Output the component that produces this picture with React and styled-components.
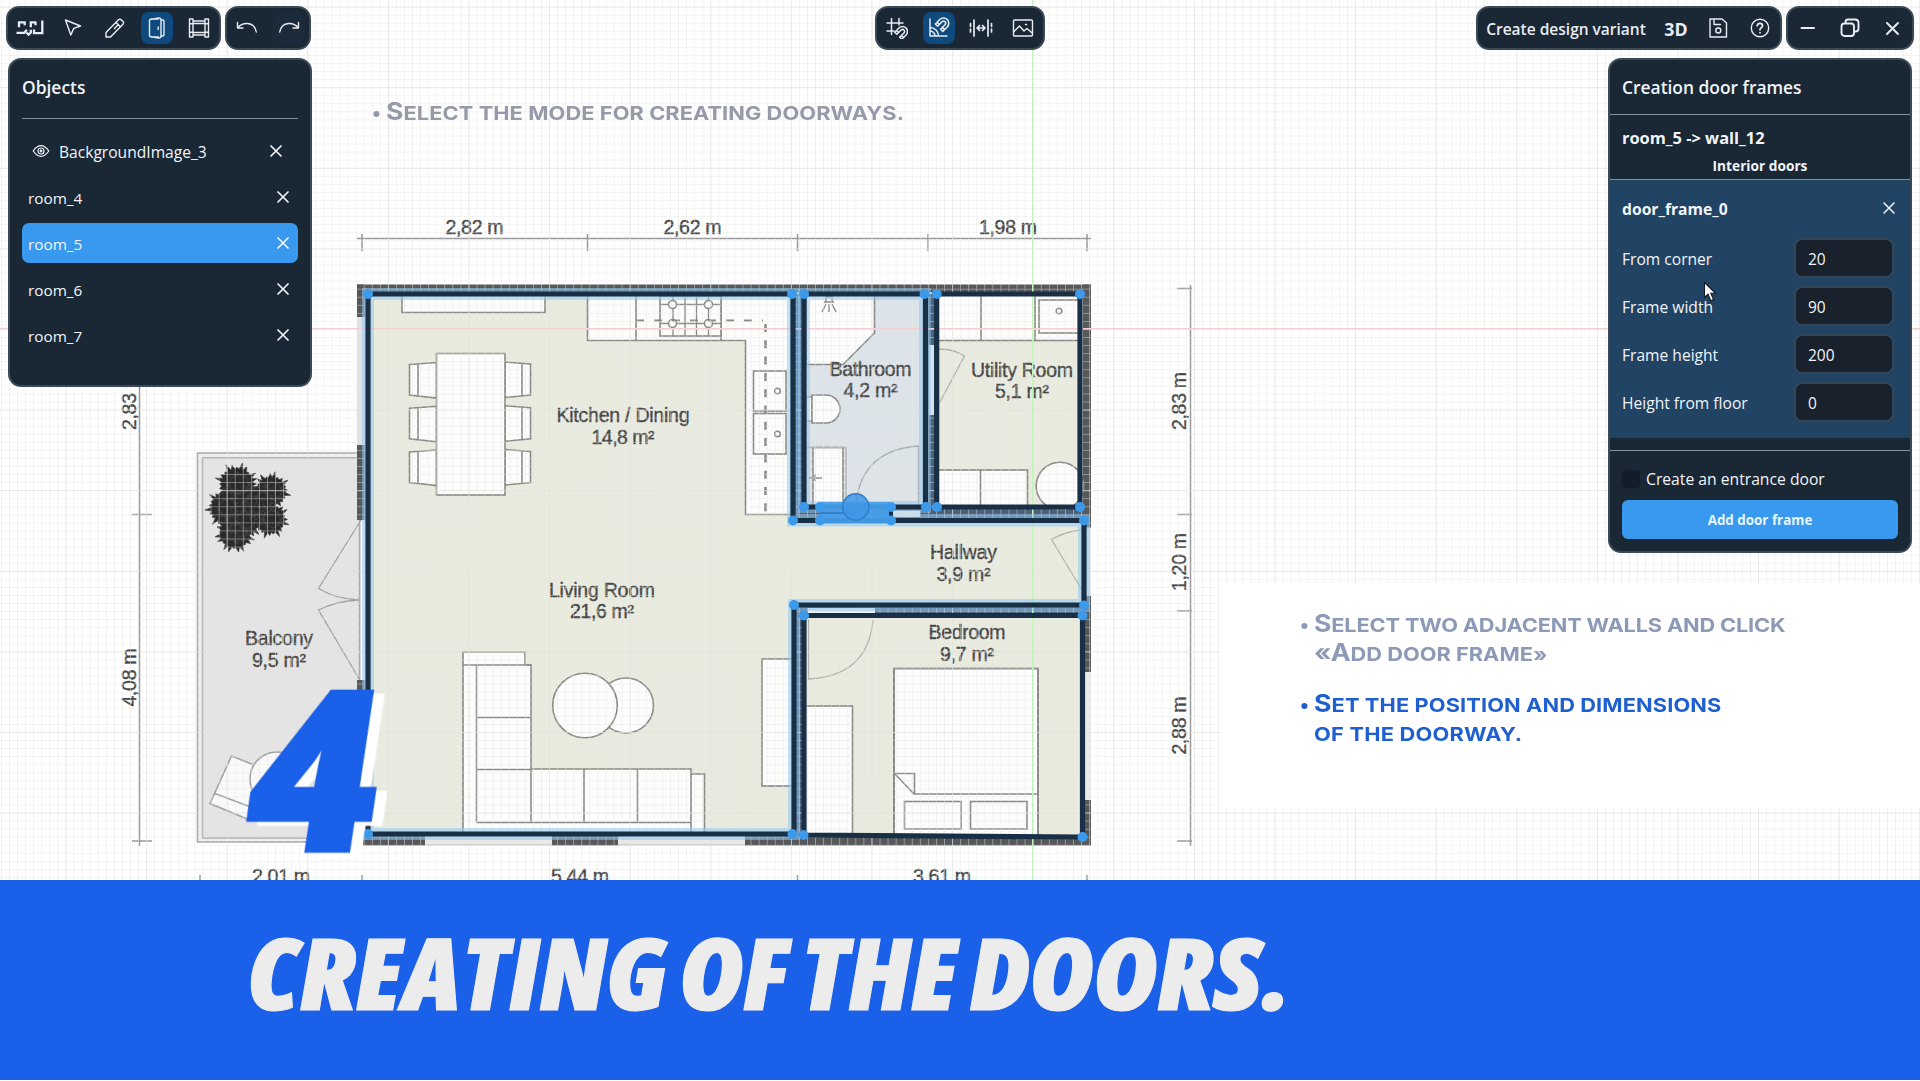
import React from 'react';
import styled, { createGlobalStyle, css } from 'styled-components';

const GlobalStyle = createGlobalStyle`
  * { box-sizing: border-box; }
  body { margin: 0; background: #fff; font-family: "Open Sans", "Noto Sans", sans-serif; color: #f1f5f9; }
`;

const ui = {
  panel: '#1a2735',
  border: '#3b4856',
  rule: '#8493a4',
  accent: '#3899ee',
  active: '#0f4a7e',
};

/* ---------- page frame ---------- */

const Page = styled.div`
  width: 1920px;
  height: 1081px;
  display: flex;
  flex-direction: column;
  overflow: hidden;
  background: #fff;
`;

const Workspace = styled.main`
  position: relative;
  height: 880px;
  overflow: hidden;
  flex: none;
`;

const Canvas = styled.svg`
  position: absolute;
  inset: 0;
  display: block;
`;

const Overlay = styled.div`
  position: relative;
  height: 100%;
  display: flex;
  flex-direction: column;
`;

const Header = styled.header`
  display: grid;
  grid-template-columns: 1fr auto 1fr;
  padding: 6px 6px 8px;
`;

const Side = styled.div`
  display: flex;
  gap: 4px;
  justify-content: ${p => (p.$end ? 'flex-end' : 'flex-start')};
`;

const ToolGroup = styled.div`
  display: flex;
  gap: 10px;
  height: 44px;
  padding: 4px;
  border: 2px solid ${ui.border};
  border-radius: 13px;
  background: ${ui.panel};
`;

const ToolButton = styled.button`
  display: flex;
  align-items: center;
  justify-content: center;
  width: ${p => p.$w || 32}px;
  height: 32px;
  padding: 0;
  border: 0;
  border-radius: 8px;
  color: #e8edf3;
  background: ${p => (p.$active ? ui.active : p.$hover ? '#1c2b3b' : 'transparent')};
`;

const TextButton = styled(ToolButton)`
  padding-top: 1px;
  font: ${p => p.$weight || 600} ${p => p.$size || 15.5}px "Open Sans", sans-serif;
  white-space: nowrap;
`;

const Columns = styled.div`
  display: flex;
  justify-content: space-between;
  align-items: flex-start;
  padding: 0 8px;
`;

const Panel = styled.section`
  width: 304px;
  height: ${p => p.$h}px;
  border: 2px solid ${ui.border};
  border-radius: 13px;
  background: ${ui.panel};
  overflow: hidden;
`;

const PanelTitle = styled.h2`
  margin: 0;
  font-size: 17.4px;
  font-weight: 600;
  line-height: 24px;
`;

/* ---------- objects panel ---------- */

const ObjectsBody = styled.div`
  padding: 15px 12px 0;
`;

const ObjectsHead = styled.div`
  height: 44px;
  border-bottom: 1px solid ${ui.rule};
  margin-bottom: 12px;
`;

const ObjectList = styled.div`
  display: flex;
  flex-direction: column;
  gap: 6px;
`;

const ObjectRow = styled.div`
  display: flex;
  align-items: center;
  height: 40px;
  padding: ${p => (p.$nested ? '0 16px 0 10px' : '0 9px 0 6px')};
  border-radius: 7px;
  background: ${p => (p.$selected ? ui.accent : 'transparent')};
`;

const ObjectName = styled.span`
  flex: 1;
  padding-top: 1px;
  margin-left: ${p => (p.$nested ? 9 : 0)}px;
  font-size: ${p => (p.$nested ? 15.6 : 15.3)}px;
  line-height: 20px;
`;

/* ---------- door frame panel ---------- */

const FrameHead = styled.div`
  height: 55px;
  padding: 15px 12px 0;
  border-bottom: 1px solid ${ui.rule};
`;

const WallInfo = styled.div`
  height: 65px;
  padding: 12px 12px 0;
  border-bottom: 1px solid ${ui.rule};
  font-weight: 700;
  display: flex;
  flex-direction: column;
`;

const WallPath = styled.span`
  font-size: 16.4px;
  line-height: 22px;
`;

const WallKind = styled.span`
  align-self: center;
  margin-top: 7px;
  font-size: 13.7px;
  line-height: 20px;
`;

const FrameCard = styled.div`
  height: 258px;
  padding: 16px 16px 0 12px;
  background: #214364;
`;

const CardHead = styled.div`
  display: flex;
  align-items: center;
  justify-content: space-between;
  height: 24px;
  margin: 0 -1px 18px 0;
`;

const CardName = styled.b`
  font-size: 15.7px;
  line-height: 22px;
  padding-top: 2px;
`;

const Field = styled.label`
  display: flex;
  align-items: center;
  justify-content: space-between;
  height: 40px;
  margin-bottom: 8px;
  font-size: 15.6px;
`;

const FieldLabel = styled.span`
  padding-top: 2px;
`;

const FieldInput = styled.input`
  width: 100px;
  height: 40px;
  padding: 2px 12px 0;
  border: 2px solid #354657;
  border-radius: 8px;
  background: #18212c;
  color: #f1f5f9;
  font: 400 15.5px "Open Sans", sans-serif;
  outline: none;
`;

const FrameFoot = styled.div`
  margin-top: 12px;
  border-top: 1px solid ${ui.rule};
  padding: 19px 12px 0;
`;

const CheckRow = styled.label`
  display: flex;
  align-items: center;
  gap: 6px;
  height: 18px;
  margin-bottom: 12px;
  font-size: 15.7px;
  line-height: 18px;
`;

const CheckBox = styled.span`
  width: 18px;
  height: 18px;
  border-radius: 4px;
  background: #111d2a;
`;

const PrimaryButton = styled.button`
  display: block;
  width: 276px;
  height: 39px;
  border: 0;
  border-radius: 6px;
  padding: 1px 0 0;
  background: ${ui.accent};
  color: #e6f7ff;
  font: 700 13.4px "Open Sans", sans-serif;
`;

/* ---------- tutorial captions ---------- */

const Caption = styled.div`
  position: absolute;
  left: ${p => p.$x}px;
  top: ${p => p.$y}px;
  display: flex;
  flex-direction: column;
  gap: 22px;
`;

const CaptionCard = styled.div`
  position: absolute;
  left: 1220px;
  top: 583px;
  width: 700px;
  height: 225px;
  background: #fff;
`;

const Step = styled.div`
  display: flex;
  color: ${p => p.$color};
  transform: scaleX(1.13);
  transform-origin: 0 0;
`;

const Bullet = styled.span`
  width: 6px;
  height: 6px;
  margin: 12px 5.5px 0 0;
  border-radius: 50%;
  background: currentColor;
  flex: none;
  transform: scaleX(0.9);
`;

const StepLines = styled.div`
  display: flex;
  flex-direction: column;
`;

const capital = css`
  &::first-letter { font-size: 23.6px; line-height: 1; }
`;

const StepLine = styled.div`
  height: 29px;
  font: 700 19.3px/29px Inter, sans-serif;
  letter-spacing: ${p => p.$track || 0}px;
  text-transform: uppercase;
  white-space: nowrap;
  ${p => p.$cap && capital}
`;

const StepNumber = styled.div`
  position: absolute;
  left: 251px;
  top: 653px;
  font: italic 800 225px/1 "Open Sans", sans-serif;
  color: #1a60e8;
  -webkit-text-stroke: 2.5px #1a60e8;
  transform: skewX(4deg) scaleX(1.04);
  transform-origin: 0 88%;
  filter: drop-shadow(10px 4px 0 #fff);
`;

const Banner = styled.footer`
  flex: none;
  height: 200px;
  padding: 42px 0 0 249px;
  background: #1a60e8;
`;

const BannerTitle = styled.h1`
  margin: 0;
  display: inline-block;
  font: italic 800 99.5px/1 "Open Sans", sans-serif;
  font-stretch: 75%;
  word-spacing: -6px;
  color: #ececec;
  -webkit-text-stroke: 1px #ececec;
  white-space: nowrap;
  transform: skewX(3.5deg) scaleX(1.115);
  transform-origin: 0 88%;
`;

const Cursor = styled.svg`
  position: absolute;
  left: 1703px;
  top: 281px;
`;

/* ---------- icons ---------- */

const Icon = ({ w = 22, h = w, sw = 1.4, children }) => (
  <svg width={w} height={h} viewBox={`0 0 ${w} ${h}`} fill="none" stroke="currentColor"
    strokeWidth={sw} strokeLinejoin="round" strokeLinecap="round">{children}</svg>
);

const LogoIcon = () => (
  <svg width="28" height="18" viewBox="0 0 28 18" fill="none" stroke="#e8edf3" strokeWidth="2.3">
    <path d="M3 8.200V3.400H9.800M8.700 3V6.200M.5 13.900H8.200L10.800 10.800M14.800 8.200V3.400H20.300M19.500 3V6.200M10.300 13.500 12.600 15.600 14.800 13.600V10.800M26.300 1.500V14.200H18V10.500" />
  </svg>
);
const PointerIcon = () => <Icon><path d="M3.500 3 18.500 9 11.800 11.400 8.800 18Z" /></Icon>;
const PencilIcon = () => <Icon><path d="M2 20V15.500L14.500 2.800Q15.800 1.600 17.200 2.800L19 4.600Q20.300 6 19 7.300L6.500 20ZM12 5.500 16.400 9.800M14.200 7.600 10.500 11.500" /></Icon>;
const DoorIcon = () => <Icon><path d="M12.500 2H5.500Q3.500 2 3.500 4V18Q3.500 20 5.500 20H12.500M5.500 2.200 13 1Q15 .8 15 3V19Q15 21.200 13 21L5.500 19.800M12.200 10V12.500M15 3H16.500Q18 3 18 4.500V17.500Q18 19 16.500 19H15" /></Icon>;
const FrameIcon = () => <Icon><path d="M1.500 2H5V20H1.500ZM17 2H20.500V20H17ZM5 4H17M5 6.500H17M5 15.500H17M5 18H17M1.500 6.500 5 7M1.500 15.500 5 15M17 7 20.500 6.500M17 15 20.500 15.500" /></Icon>;
const UndoIcon = () => <Icon><path d="M1.500 5.500V11H7M1.800 10.800Q5.500 6 11.500 6.500 19 7.200 20.300 15" /></Icon>;
const RedoIcon = () => <Icon><path d="M20.500 5.500V11H15M20.200 10.800Q16.500 6 10.500 6.500 3 7.200 1.700 15" /></Icon>;
const Magnet = ({ x, y, s = 1 }) => (
  <g transform={`translate(${x} ${y}) rotate(45) scale(${s})`}>
    <path d="M-5 5V-1A5 5 0 0 1 5 -1V5H2V-1A2 2 0 0 0 -2 -1V5ZM-5 2.6H-2M2 2.6H5" />
  </g>
);
const GridSnapIcon = () => <Icon sw={1.5}><path d="M1 6H17M1 14H8M5.500 1.500V17.500M13 1.500V8" /><Magnet x={15.8} y={15.2} /></Icon>;
const AngleSnapIcon = () => <Icon sw={1.5}><path d="M2 2V19H19M2 10.500A8.500 8.500 0 0 1 10.500 19M2 14A5 5 0 0 1 7 19" /><Magnet x={14.800} y={7} s={1.05} /></Icon>;
const SpanIcon = () => (
  <Icon w={24} h={22} sw={1.7}>
    <path d="M5 3V19M19 3V19M8.500 11H15.500M10.500 8.500 8 11 10.500 13.500M13.500 8.500 16 11 13.500 13.500" />
    <path d="M1.500 6.500V16M22.500 6.500V16" strokeDasharray="3 2.500" />
  </Icon>
);
const ImageIcon = () => <Icon><rect x="1.500" y="3" width="19" height="16" rx="1" /><path d="M2 14.500 7.500 9 12 14 15 11.500 20.200 16M13.500 7.500H14.500" /></Icon>;
const SaveIcon = () => <Icon><path d="M3 2H15L19.500 6V20H3ZM7 2V7.500H13.500" /><circle cx="11.300" cy="13.500" r="2.500" /></Icon>;
const HelpIcon = () => <Icon><circle cx="11" cy="11" r="8.700" /><path d="M8.300 8.800Q8.500 6.300 11 6.300T13.600 8.700Q13.600 10 12.200 10.800 11 11.500 11 12.800M11 15.500V15.700" strokeWidth="1.700" /></Icon>;
const MinimizeIcon = () => <Icon sw={2}><path d="M4.500 11H17" /></Icon>;
const RestoreIcon = () => <Icon sw={1.900}><rect x="2.500" y="6.500" width="12.500" height="12.500" rx="3" /><path d="M6.500 6V5Q6.500 2.500 9 2.500H16Q19.500 2.500 19.500 6V11.500Q19.500 14.500 16.500 14.500H15" /></Icon>;
const CloseIcon = ({ size = 12, sw = 1.7 }) => <Icon w={size} sw={sw}><path d={`M1 1 ${size - 1} ${size - 1}M${size - 1} 1 1 ${size - 1}`} /></Icon>;
const EyeIcon = () => <Icon w={18} sw={1.200}><path d="M1.200 9Q5 3.700 9 3.700T16.800 9Q13 14.300 9 14.300T1.200 9Z" /><circle cx="9" cy="9" r="3" /><circle cx="9" cy="9" r=".8" /></Icon>;

/* ---------- floor plan drawing ---------- */

const INK = '#8a8a86';
const FLOOR = '#e9ebdf';
const WALL = '#56585a';
const BAND = '#4c617b';

const dimensionLabels = [
  ['2,82 m', 474.500, 234], ['2,62 m', 692.500, 234], ['1,98 m', 1008, 234],
  ['2,01 m', 281, 883], ['5,44 m', 580, 883], ['3,61 m', 942, 883],
];
const sideLabels = [
  ['2,83 m', 135.500, 401], ['4,08 m', 135.500, 677.500],
  ['2,83 m', 1186, 401], ['1,20 m', 1186, 562], ['2,88 m', 1186, 725.500],
];
const roomLabels = [
  ['Kitchen / Dining', '14,8 m²', 623, 422.300, 133, 63],
  ['Living Room', '21,6 m²', 602, 596.700, 106, 64],
  ['Bathroom', '4,2 m²', 870.500, 375.700, 82, 54],
  ['Utility Room', '5,1 m²', 1022, 376.500, 102, 54],
  ['Hallway', '3,9 m²', 963.500, 559, 67, 54],
  ['Bedroom', '9,7 m²', 967, 639, 77, 54],
  ['Balcony', '9,5 m²', 279, 645, 68, 54],
];
const wallBlocks = [
  [357, 284.500, 734, 8], [357, 284.500, 8, 32.500], [357, 445, 8, 75], [357, 680, 8, 30],
  [1083, 284.500, 8, 243], [1083, 596, 8, 76], [1083, 800, 8, 45],
  [363, 836, 62, 9.500], [552, 836, 66, 9.500], [745, 836, 346, 9.500],
];
const handles = [
  [368, 294], [792, 294], [804, 294], [924.500, 294], [936.700, 294], [1080, 294],
  [804, 507], [820, 507], [891, 507], [926, 507], [937, 507], [1080, 507],
  [793, 520.500], [820, 520.500], [891, 520.500], [1084, 520.500],
  [794, 605], [1084, 605.500], [804, 615.500], [1082.500, 615.500],
  [792.500, 834], [803.500, 835], [1082.500, 837], [368, 834],
];
const room5 = 'M368 294H793V520.500H1084V605H794V834H368Z';

const leafTufts = [[237, 484, 19], [271, 491, 17], [226, 508, 18], [252, 506, 21], [235, 533, 18], [270, 519, 17], [244, 520, 18], [262, 500, 16]];
const tuftPath = ([cx, cy, r], seed) => {
  const pts = [];
  const n = 48;
  for (let i = 0; i < n; i += 1) {
    const a = (i / n) * Math.PI * 2 + seed;
    const k = i % 2 ? 0.8 : 1.02 + 0.16 * Math.sin(i * 7.3 + seed * 3);
    pts.push(`${(cx + Math.cos(a) * r * k).toFixed(1)} ${(cy + Math.sin(a) * r * k).toFixed(1)}`);
  }
  return `M${pts.join('L')}Z`;
};

const Plan = () => (
  <g fill="none" stroke={INK} strokeWidth="1.6">
    <g stroke="#999" strokeWidth="1.500">
      <path d="M357 238.500H1091M362 234V251M587.500 234V251M797.500 234V251M928 234V251M1087 234V251" />
      <path d="M1190.500 285V846M1177 288.500H1192M1177 514.500H1192M1177 611H1192M1177 841H1192" />
      <path d="M139.500 285V846M132 514.500H152M132 841H152" />
      <path d="M200 875V890M362 875V890M797.500 875V890M1087 875V890" />
    </g>

    <rect x="197.500" y="453" width="162" height="389" fill="#efefef" stroke="#aaa" />
    <rect x="202.500" y="458" width="157" height="380" fill="#e4e4e4" stroke="#aaa" />
    <g fill="#2a2a2a" stroke="#444" strokeWidth=".7">
      {leafTufts.map((t, i) => <path key={i} d={tuftPath(t, i)} />)}
    </g>
    <g stroke="#4a4a4a" strokeWidth=".6">
      {leafTufts.map(([x, y, r], i) => <path key={i} d={tuftPath([x + 2, y, r * 0.55], i + 2)} />)}
    </g>
    <g stroke="#a0a0a0">
      <path d="M231.500 756 210 803.500 252 821 274 773Z" fill="#fafafa" />
      <path d="M215 793.500 256 809" />
      <circle cx="277" cy="779" r="27" fill="#fafafa" />
      <path d="M361 520 318.500 588.500Q336 599 359 600M361 682 318.500 610Q336 601 359 600" strokeWidth="1.300" />
    </g>

    <g stroke="none">
      <rect x="357" y="317" width="8" height="128" fill="#e2e2e2" />
      <rect x="1084" y="527" width="7" height="318" fill="#e9eaec" />
      <rect x="363" y="837" width="720" height="8" fill="#e8e8e8" />
      <path d={room5} fill={FLOOR} />
      <rect x="937" y="294" width="143" height="213" fill={FLOOR} />
      <rect x="804" y="616" width="279" height="220" fill={FLOOR} />
      <rect x="804" y="294" width="121" height="213" fill="#dce3e9" />
      {wallBlocks.map(([x, y, w, h], i) => <rect key={i} x={x} y={y} width={w} height={h} fill={WALL} />)}
      <path d="M793 294H804V520H793ZM794 605H804V836H794ZM925 294H937V507H925ZM793 507H1084V520H793ZM794 605H1084V616H794Z" fill={BAND} />
      <rect x="929" y="345" width="5" height="70" fill="#d5e2ee" />
      <rect x="808" y="608" width="67" height="5" fill="#f0f2f2" />
    </g>
    <path d="M425 845H552M618 845H745" stroke="#bbb" strokeWidth="1" />

    <g fill="#fdfdfd">
      <rect x="402" y="294" width="143" height="18.500" />
      <path d="M587.500 294V340.500H745.500V514.500H792V294Z" />
      <path d="M636 296V340M721 296V340" />
      <rect x="660" y="296" width="61" height="40" />
      <path d="M673 296V336M685 296V336M696.500 296V336M708.500 296V336M660 304.500H721M660 323.500H721" strokeWidth="1.300" />
      {[[672.500, 304.500], [708.500, 304.500], [672.500, 323.500], [708.500, 323.500]].map(([x, y]) => <circle key={x + y} cx={x} cy={y} r="4" />)}
      <rect x="753.500" y="371" width="32.500" height="40" />
      <rect x="753.500" y="413.500" width="32.500" height="40.500" />
      <circle cx="777.500" cy="391" r="2.800" /><circle cx="777.500" cy="434" r="2.800" />
      <path d="M636 320.500H763" fill="none" strokeDasharray="8 10" strokeWidth="2.200" />
      <path d="M765.500 324V514" fill="none" strokeDasharray="8 8.300" strokeWidth="2.600" />

      {[0, 43.800, 87.500].map(d => (
        <g key={d} transform={`translate(0 ${d})`}>
          <path d="M409.500 364.500 436.500 362.500V398L409.500 395ZM418 364V396" />
          <path d="M505 362 530.500 364V395L505 397.500ZM522 363.500V396" />
        </g>
      ))}
      <rect x="436.500" y="353.500" width="68.500" height="141.500" />

      <path d="M463 652H525V665H531V769H691V774H704.500V834H463Z" />
      <path d="M463 665H525M476.500 665V822M476.500 665H531M476.500 717.500H531M476.500 769.500H531M476.500 822.500H691M531 769V822M584 769V822M637.500 769V822M691 774V832" />
      <circle cx="626" cy="705.500" r="27.500" />
      <circle cx="585" cy="705.500" r="32.300" />
      <rect x="762" y="659" width="32" height="127" />

      <path d="M806 294H874.500V333L843 364.500H806Z" />
      <path d="M824 302H834M826 302V297H832V302M826 304 822 312M829 304V312M832 304 836 312" strokeWidth="1.400" />
      <rect x="806" y="397" width="6" height="24" strokeWidth="1.200" />
      <path d="M812 395H826A14 14 0 0 1 826 423H812Z" />
      <rect x="813" y="447.500" width="30" height="60" />
      <path d="M806 447.500H845M846 447V505" stroke="#b5b5b5" />
      <path d="M809 478H822M815 474V481" stroke="#aaa" strokeWidth="2" />
      <path d="M918.500 505V446Q862 450 856 503" fill="none" stroke="#a8b0b6" strokeWidth="1.300" />

      <rect x="938" y="294" width="142" height="46.500" />
      <path d="M981 296V340M1035 296V340" />
      <rect x="1039" y="300" width="40" height="33" />
      <circle cx="1059" cy="311" r="2.800" />
      <path d="M939 349Q954 349 964.500 356L939.500 403" fill="none" stroke="#b0b0ac" strokeWidth="1.300" />
      <rect x="938" y="470" width="89.500" height="38" />
      <path d="M980.500 470V505" />
      <circle cx="1060" cy="486" r="23.800" />

      <path d="M1082 530Q1066 531 1051.500 539.500L1082 590" fill="none" stroke="#b0b0ac" strokeWidth="1.300" />

      <rect x="804" y="706" width="48.500" height="130" />
      <rect x="894" y="668.500" width="144" height="168" strokeWidth="2" />
      <path d="M894 773.500H914.500V794M895 774 914 794H1038" />
      <rect x="904.500" y="801.500" width="56.500" height="27.500" />
      <rect x="970.500" y="801.500" width="56.500" height="27.500" />
      <path d="M808.500 619V679Q868 676 873 620" fill="none" stroke="#b0b0ac" strokeWidth="1.300" />
    </g>
  </g>
);

const PlanText = () => (
  <g fill="#484848" stroke="#484848" strokeWidth=".4" fontFamily='"Liberation Sans", Arial, sans-serif' fontSize="19.500" textAnchor="middle">
    {dimensionLabels.map(([t, x, y]) => <text key={t} x={x} y={y} textLength="58">{t}</text>)}
    {sideLabels.map(([t, x, y]) => (
      <text key={`${t}${x}`} transform={`translate(${x} ${y}) rotate(-90)`} textLength="58">{t}</text>
    ))}
    {roomLabels.map(([name, area, x, y, w1, w2]) => (
      <g key={name}>
        <text x={x} y={y} textLength={w1}>{name}</text>
        <text x={x} y={y + 21.500} textLength={w2}>{area}</text>
      </g>
    ))}
  </g>
);

const GridLines = () => (
  <g>
    <defs>
      <pattern id="minor" width="8.06" height="8.06" x="1032.700" y="329" patternUnits="userSpaceOnUse">
        <path d="M0 0V8.060M0 0H8.060" stroke="#e3e5e1" strokeWidth="1.500" opacity=".6" />
      </pattern>
      <pattern id="major" width="80.600" height="80.600" x="1032.700" y="329" patternUnits="userSpaceOnUse">
        <path d="M0 0V80.600M0 0H80.600" stroke="#dfe1dd" strokeWidth="1.400" opacity=".7" />
      </pattern>
    </defs>
    <rect width="1920" height="880" fill="url(#minor)" />
    <rect width="1920" height="880" fill="url(#major)" />
    <path d="M0 328.500H1920" stroke="#f8cfd0" strokeWidth="1" />
    <path d="M1032.500 0V880" stroke="#c4f2bd" strokeWidth="1" />
  </g>
);

const Walls = () => (
  <g fill="none" stroke="#192f45" strokeWidth="5.200">
    <path d={room5} stroke="#8fc6ee" strokeWidth="12" opacity=".55" />
    <path d="M804 294H925V507H804Z" stroke="#8fc6ee" strokeWidth="12" opacity=".5" />
    <path d={room5} />
    <path d="M804 294H925.500V507H804ZM936.700 294H1080V507H936.700ZM804 615.500H1082.500V837L804 835Z" />
    <rect x="893" y="510.500" width="27" height="6.500" fill="#cbdcec" stroke="none" />
    <rect x="820" y="502" width="71" height="21.500" fill="#469eeb" opacity=".93" stroke="none" />
    <path d="M820 513H850" stroke="#2d76b8" strokeWidth="1.500" />
    <path d="M891 508V520" strokeWidth="4" />
    <circle cx="855.700" cy="507" r="13.200" fill="#3f97e6" fillOpacity=".85" stroke="#2f7fca" strokeWidth="1.500" />
    <g fill="#3d9aea" stroke="none">
      {handles.map(([x, y], i) => <circle key={i} cx={x} cy={y} r="5" />)}
    </g>
  </g>
);

/* ---------- app ---------- */

const rooms = ['room_4', 'room_5', 'room_6', 'room_7'];
const fields = [
  ['From corner', '20'], ['Frame width', '90'], ['Frame height', '200'], ['Height from floor', '0'],
];

export default function App() {
  return (
    <>
      <GlobalStyle />
      <Page>
        <Workspace>
          <Canvas width="1920" height="880" viewBox="0 0 1920 880">
            <Plan />
            <PlanText />
            <GridLines />
            <Walls />
          </Canvas>

          <CaptionCard />
          <Caption $x={373} $y={99}>
            <Step $color="#959aa8">
              <Bullet />
              <StepLines><StepLine $cap $track={0.07}>Select the mode for creating doorways.</StepLine></StepLines>
            </Step>
          </Caption>
          <Caption $x={1301} $y={611}>
            <Step $color="#8c9ab8">
              <Bullet />
              <StepLines>
                <StepLine $cap $track={-0.15}>Select two adjacent walls and click</StepLine>
                <StepLine $cap>«Add door frame»</StepLine>
              </StepLines>
            </Step>
            <Step $color="#1f5fcf">
              <Bullet />
              <StepLines>
                <StepLine $cap $track={0.1}>Set the position and dimensions</StepLine>
                <StepLine $track={0.2}>of the doorway.</StepLine>
              </StepLines>
            </Step>
          </Caption>
          <StepNumber>4</StepNumber>

          <Overlay>
            <Header>
              <Side>
                <ToolGroup>
                  <ToolButton $w={35}><LogoIcon /></ToolButton>
                  <ToolButton><PointerIcon /></ToolButton>
                  <ToolButton><PencilIcon /></ToolButton>
                  <ToolButton $active><DoorIcon /></ToolButton>
                  <ToolButton><FrameIcon /></ToolButton>
                </ToolGroup>
                <ToolGroup>
                  <ToolButton><UndoIcon /></ToolButton>
                  <ToolButton $hover><RedoIcon /></ToolButton>
                </ToolGroup>
              </Side>
              <ToolGroup>
                <ToolButton><GridSnapIcon /></ToolButton>
                <ToolButton $active><AngleSnapIcon /></ToolButton>
                <ToolButton><SpanIcon /></ToolButton>
                <ToolButton><ImageIcon /></ToolButton>
              </ToolGroup>
              <Side $end>
                <ToolGroup>
                  <TextButton $w={168}>Create design variant</TextButton>
                  <TextButton $weight={700} $size={17.800}>3D</TextButton>
                  <ToolButton><SaveIcon /></ToolButton>
                  <ToolButton><HelpIcon /></ToolButton>
                </ToolGroup>
                <ToolGroup>
                  <ToolButton><MinimizeIcon /></ToolButton>
                  <ToolButton><RestoreIcon /></ToolButton>
                  <ToolButton><CloseIcon size={13} sw={1.900} /></ToolButton>
                </ToolGroup>
              </Side>
            </Header>

            <Columns>
              <Panel $h={329}>
                <ObjectsBody>
                  <ObjectsHead><PanelTitle>Objects</PanelTitle></ObjectsHead>
                  <ObjectList>
                    <ObjectRow $nested>
                      <EyeIcon />
                      <ObjectName $nested>BackgroundImage_3</ObjectName>
                      <CloseIcon />
                    </ObjectRow>
                    {rooms.map(name => (
                      <ObjectRow key={name} $selected={name === 'room_5'}>
                        <ObjectName>{name}</ObjectName>
                        <CloseIcon />
                      </ObjectRow>
                    ))}
                  </ObjectList>
                </ObjectsBody>
              </Panel>

              <Panel $h={495}>
                <FrameHead><PanelTitle>Creation door frames</PanelTitle></FrameHead>
                <WallInfo>
                  <WallPath>room_5 -&gt; wall_12</WallPath>
                  <WallKind>Interior doors</WallKind>
                </WallInfo>
                <FrameCard>
                  <CardHead><CardName>door_frame_0</CardName><CloseIcon size={12} sw={1.500} /></CardHead>
                  {fields.map(([label, value]) => (
                    <Field key={label}>
                      <FieldLabel>{label}</FieldLabel>
                      <FieldInput defaultValue={value} />
                    </Field>
                  ))}
                </FrameCard>
                <FrameFoot>
                  <CheckRow><CheckBox />Create an entrance door</CheckRow>
                  <PrimaryButton>Add door frame</PrimaryButton>
                </FrameFoot>
              </Panel>
            </Columns>
          </Overlay>

          <Cursor width="15" height="22" viewBox="0 0 15 22">
            <path d="M1.500 1.500V16.500L5 13.300 7.800 19.800 10.500 18.600 7.800 12.300H12.500Z" fill="#fff" stroke="#111a24" strokeWidth="1.100" />
          </Cursor>
        </Workspace>
        <Banner><BannerTitle>CREATING OF THE DOORS.</BannerTitle></Banner>
      </Page>
    </>
  );
}
